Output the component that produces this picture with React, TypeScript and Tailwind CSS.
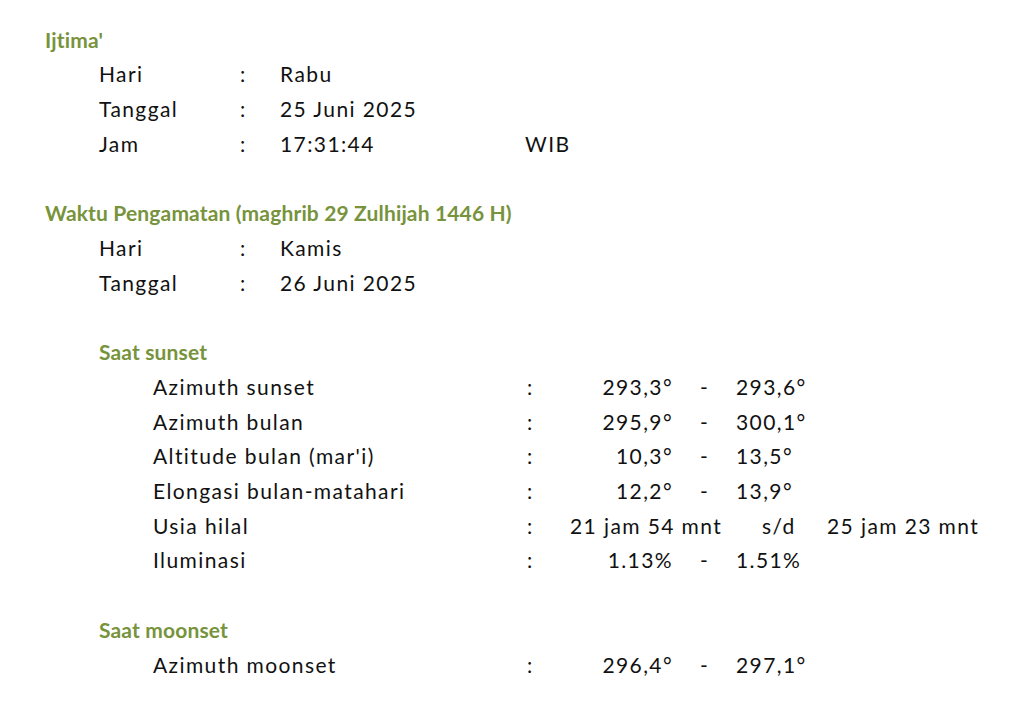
const green = "text-[#77933c]";

type Pair = { label: string; value: string; extra?: string };

const Heading = ({ text, indent }: { text: string; indent: string }) => (
  <div className={`flex h-[34.72px] items-center text-[21px] font-bold tracking-[0.15px] ${green} ${indent}`}>{text}</div>
);

const InfoRow = ({ label, value, extra }: Pair) => (
  <div className="flex h-[34.72px] items-center pl-[99px]">
    <div className="w-[141px]">{label}</div>
    <div className="w-[40px]">:</div>
    <div className="w-[245px]">{value}</div>
    {extra && <div>{extra}</div>}
  </div>
);

type Range = { label: string; from: string; to: string };

const RangeRow = ({ label, from, to }: Range) => (
  <div className="flex h-[34.72px] items-center pl-[153px]">
    <div className="w-[374px]">{label}</div>
    <div className="w-[13px]">:</div>
    <div className="w-[133px] text-right">{from}</div>
    <div className="w-[63px] text-center">-</div>
    <div>{to}</div>
  </div>
);

const Blank = () => <div className="h-[34.72px]" />;

const sunset: Range[] = [
  { label: "Azimuth sunset", from: "293,3°", to: "293,6°" },
  { label: "Azimuth bulan", from: "295,9°", to: "300,1°" },
  { label: "Altitude bulan (mar'i)", from: "10,3°", to: "13,5°" },
  { label: "Elongasi bulan-matahari", from: "12,2°", to: "13,9°" },
];

export default function App() {
  return (
    <div className="h-[705px] w-[1024px] overflow-hidden bg-white pt-[22px] font-['Lato',sans-serif] text-[21px] tracking-[1.4px] text-[#111]">
      <Heading text="Ijtima'" indent="pl-[45px]" />
      <InfoRow label="Hari" value="Rabu" />
      <InfoRow label="Tanggal" value="25 Juni 2025" />
      <InfoRow label="Jam" value="17:31:44" extra="WIB" />
      <Blank />

      <Heading text="Waktu Pengamatan (maghrib 29 Zulhijah 1446 H)" indent="pl-[45px]" />
      <InfoRow label="Hari" value="Kamis" />
      <InfoRow label="Tanggal" value="26 Juni 2025" />
      <Blank />

      <Heading text="Saat sunset" indent="pl-[99px]" />
      {sunset.map((r) => (
        <RangeRow key={r.label} {...r} />
      ))}
      <div className="flex h-[34.72px] items-center pl-[153px]">
        <div className="w-[374px]">Usia hilal</div>
        <div className="w-[43px]">:</div>
        <div className="w-[192px]">21 jam 54 mnt</div>
        <div className="w-[65px]">s/d</div>
        <div>25 jam 23 mnt</div>
      </div>
      <RangeRow label="Iluminasi" from="1.13%" to="1.51%" />
      <Blank />

      <Heading text="Saat moonset" indent="pl-[99px]" />
      <RangeRow label="Azimuth moonset" from="296,4°" to="297,1°" />
    </div>
  );
}
